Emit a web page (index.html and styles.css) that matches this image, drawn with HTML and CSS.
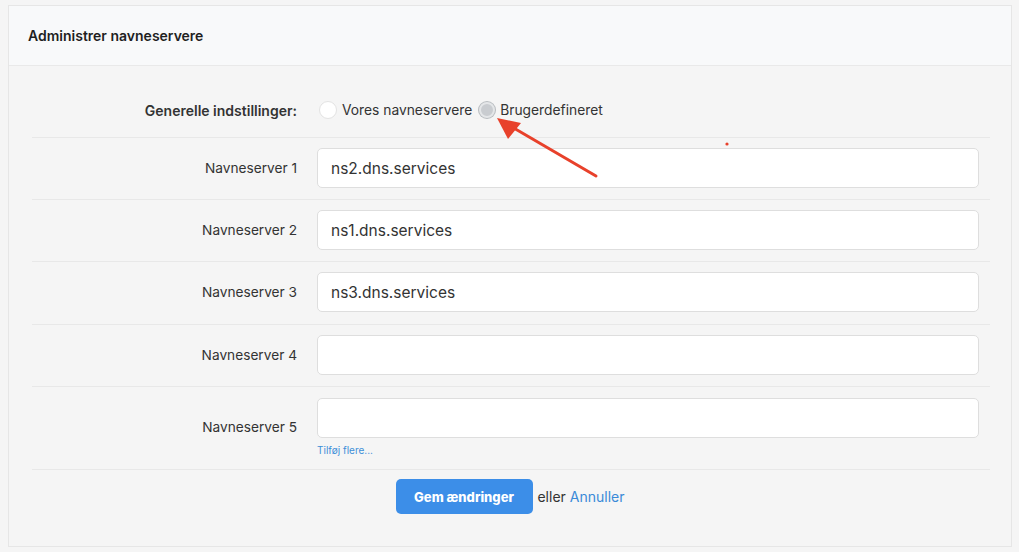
FILE: index.html
```html
<!DOCTYPE html>
<html lang="da">
<head>
<meta charset="utf-8">
<title>Administrer navneservere</title>
<link rel="stylesheet" href="styles.css">
</head>
<body>
<div class="card">
  <div class="card-header">Administrer navneservere</div>
  <div class="card-body">
    <div class="row row-first">
      <div class="label label-strong">Generelle indstillinger:</div>
      <div class="radios">
        <label class="radio"><span class="dot"></span>Vores navneservere</label>
        <label class="radio"><span class="dot dot-on"></span>Brugerdefineret</label>
      </div>
    </div>
    <div class="row">
      <div class="label">Navneserver 1</div>
      <div class="field"><input class="input" type="text" value="ns2.dns.services"></div>
    </div>
    <div class="row">
      <div class="label">Navneserver 2</div>
      <div class="field"><input class="input" type="text" value="ns1.dns.services"></div>
    </div>
    <div class="row row-mid">
      <div class="label">Navneserver 3</div>
      <div class="field"><input class="input" type="text" value="ns3.dns.services"></div>
    </div>
    <div class="row">
      <div class="label">Navneserver 4</div>
      <div class="field"><input class="input" type="text" value=""></div>
    </div>
    <div class="row row-last">
      <div class="label">Navneserver 5</div>
      <div class="field"><input class="input" type="text" value=""><a class="more" href="#">Tilføj flere...</a></div>
    </div>
    <div class="actions">
      <button class="btn" type="button">Gem ændringer</button>
      <span class="or">eller</span> <a class="cancel" href="#">Annuller</a>
    </div>
  </div>
</div>
<svg class="annot" width="1019" height="552" viewBox="0 0 1019 552" aria-hidden="true">
  <line x1="596" y1="176" x2="512" y2="127" stroke="#e8412b" stroke-width="3" stroke-linecap="round"/>
  <polygon points="497,118 521,123 508,139" fill="#e8412b"/>
  <circle cx="727" cy="144" r="1.6" fill="#e8412b"/>
</svg>
</body>
</html>
```
FILE: styles.css
```css
* { box-sizing: border-box; }
html, body { margin: 0; padding: 0; }
body {
  background: #f5f5f5;
  font-family: Inter, "Noto Sans", sans-serif;
  color: #333;
  padding: 5px 7px 5px 8px;
  position: relative;
  width: 1019px;
  height: 552px;
  overflow: hidden;
}
.card {
  border: 1px solid #e6e6e6;
  background: #f5f5f5;
  height: 542px;
}
.card-header {
  height: 60px;
  background: #f8f9fa;
  border-bottom: 1px solid #e9e9e9;
  padding: 20px 0 0 19px;
  font-size: 14px;
  font-weight: 600;
  color: #1f1f1f;
  line-height: 20px;
}
.card-body {
  padding: 0 21px 0 23px;
}
.row {
  display: grid;
  grid-template-columns: 265px 1fr;
  column-gap: 20px;
  align-items: center;
  padding: 10px 11px 11px 0;
  border-bottom: 1px solid #e8e8e8;
}
.row-first {
  padding-top: 31px;
  padding-bottom: 14px;
}
.row-mid {
  padding-bottom: 12px;
}
.row-last {
  padding-top: 11px;
  padding-bottom: 13px;
}
.label {
  text-align: right;
  font-size: 13.7px;
  color: #333;
}
.label-strong {
  font-weight: 600;
  font-size: 14px;
  color: #333;
}
.radios {
  display: flex;
  align-items: center;
  height: 26px;
  margin-left: 2px;
}
.radio {
  display: flex;
  align-items: center;
  font-size: 13.8px;
  color: #333;
  margin-right: 6px;
}
.dot {
  width: 18px;
  height: 18px;
  border-radius: 50%;
  background: #fff;
  border: 1px solid #e3e3e3;
  margin-right: 5px;
}
.dot-on {
  background: #c9ccd0;
  border: 2px solid #e4e6e8;
  box-shadow: 0 0 0 1px #b8bcc0;
  width: 16px;
  height: 16px;
  margin: 0 5px 0 1px;
}
.field {
  display: flex;
  flex-direction: column;
}
.input {
  height: 40px;
  width: 100%;
  border: 1px solid #dedede;
  border-radius: 5px;
  background: #fff;
  padding: 0 13px;
  font-family: Inter, "Noto Sans", sans-serif;
  font-size: 15.5px;
  color: #333;
  outline: none;
}
.more {
  font-size: 10px;
  color: #3d8fd8;
  text-decoration: none;
  margin-top: 6px;
  line-height: 12px;
}
.actions {
  text-align: center;
  padding-top: 9px;
  padding-right: 2px;
  font-size: 14px;
}
.btn {
  height: 35px;
  padding: 0 12px;
  background: #3c8ee8;
  color: #fff;
  border: none;
  border-radius: 5px;
  font-family: Inter, "Noto Sans", sans-serif;
  font-weight: 800;
  font-size: 13px;
  vertical-align: middle;
  width: 137px;
}
.or { color: #333; margin-left: 1px; vertical-align: middle; }
.cancel { color: #3a8ad8; text-decoration: none; vertical-align: middle; }
.annot {
  position: absolute;
  left: 0;
  top: 0;
  pointer-events: none;
}
```
